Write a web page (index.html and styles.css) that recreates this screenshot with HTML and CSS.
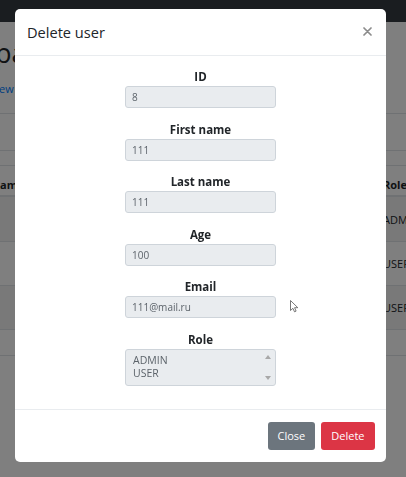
FILE: index.html
```html
<!DOCTYPE html>
<html lang="en">
<head>
<meta charset="utf-8">
<title>Delete user</title>
<link rel="stylesheet" href="styles.css">
</head>
<body>
<div class="page">
  <div class="navbar"></div>
  <div class="head"><h1 class="page-title">pa</h1></div>
  <div class="tabs"><span class="tab-link">ew</span></div>
  <div class="card-head"></div>
  <div class="table">
    <div class="trow thead"><span class="cell">am</span><span class="cell">Role</span></div>
    <div class="trow striped"><span class="cell"></span><span class="cell">ADMIN</span></div>
    <div class="trow"><span class="cell"></span><span class="cell">USER</span></div>
    <div class="trow striped"><span class="cell"></span><span class="cell">USER</span></div>
    <div class="trow last"></div>
  </div>
</div>
<div class="backdrop"></div>
<div class="modal">
  <div class="modal-header">
    <h5 class="modal-title">Delete user</h5>
    <span class="close" aria-label="Close">
      <svg width="9" height="9" viewBox="0 0 9 9"><path d="M1 1 L8 8 M8 1 L1 8" stroke="#8c8c8c" stroke-width="1.7" stroke-linecap="round"/></svg>
    </span>
  </div>
  <div class="modal-body">
    <div class="group"><label class="label">ID</label><div class="input">8</div></div>
    <div class="group"><label class="label">First name</label><div class="input">111</div></div>
    <div class="group"><label class="label">Last name</label><div class="input">111</div></div>
    <div class="group"><label class="label">Age</label><div class="input">100</div></div>
    <div class="group"><label class="label">Email</label><div class="input">111@mail.ru</div></div>
    <div class="group"><label class="label">Role</label>
      <div class="listbox">
        <div class="options"><div class="opt">ADMIN</div><div class="opt">USER</div></div>
        <div class="scrollbar">
          <svg width="6" height="4" viewBox="0 0 6 4"><path d="M0 4 L3 0 L6 4 Z" fill="#a8a8a8"/></svg>
          <svg width="6" height="4" viewBox="0 0 6 4"><path d="M0 0 L3 4 L6 0 Z" fill="#a8a8a8"/></svg>
        </div>
      </div>
    </div>
  </div>
  <div class="modal-footer">
    <button class="btn btn-secondary">Close</button>
    <button class="btn btn-danger">Delete</button>
  </div>
</div>
<svg class="cursor" width="10" height="13" viewBox="0 0 10 13"><path d="M0.5 0.5 L0.5 10.5 L2.9 8.3 L4.5 11.8 L6.1 11.1 L4.6 7.7 L7.8 7.7 Z" fill="#ffffff" stroke="#555" stroke-width="0.8" stroke-linejoin="round"/></svg>
</body>
</html>
```

FILE: styles.css
```css
* { box-sizing: border-box; }
html, body { margin: 0; padding: 0; }
body {
  width: 406px;
  height: 477px;
  overflow: hidden;
  background: #ffffff;
  font-family: "Open Sans", "Noto Sans", sans-serif;
  color: #212529;
}
.page { width: 406px; }
.navbar { height: 22px; background: #343a40; }
.head { height: 60px; padding-top: 14px; }
.page-title {
  margin: 0 0 0 -5px;
  font-size: 27px;
  font-weight: 400;
  line-height: 34px;
}
.tabs {
  height: 32px;
  border-bottom: 1px solid #dee2e6;
  font-size: 11px;
  line-height: 14px;
}
.tab-link { color: #007bff; margin-left: -1px; }
.card-head { height: 37px; border-bottom: 1px solid #dee2e6; }
.table { margin-top: 14px; border-top: 1px solid #dee2e6; }
.trow {
  display: grid;
  grid-template-columns: 383px 1fr;
  height: 44px;
  align-items: center;
  font-size: 11px;
  border-top: 1px solid #dee2e6;
}
.trow:first-child { border-top: 0; }
.thead {
  height: 31px;
  align-items: end;
  padding-bottom: 3px;
  font-weight: 700;
  border-bottom: 2px solid #dee2e6;
}
.thead + .trow { border-top: 0; }
.striped { background: rgba(0, 0, 0, 0.05); }
.cell { white-space: nowrap; overflow: hidden; }
.trow.last { height: 27px; border-bottom: 1px solid #dee2e6; }

.backdrop {
  position: fixed;
  inset: 0;
  background: rgba(0, 0, 0, 0.5);
}
.modal {
  position: fixed;
  left: 15px;
  top: 9px;
  width: 371px;
  background: #ffffff;
  border-radius: 5px;
  display: flex;
  flex-direction: column;
}
.modal-header {
  height: 47px;
  border-bottom: 1px solid #e9ecef;
  display: flex;
  align-items: center;
  justify-content: space-between;
  padding: 0 14px 1px 12px;
}
.modal-title {
  margin: 0;
  font-size: 14.6px;
  font-weight: 400;
  color: #212529;
  line-height: 20px;
}
.close { display: flex; margin-top: -1px; }
.modal-body {
  padding: 13px 0 23px;
  display: flex;
  flex-direction: column;
  align-items: center;
  gap: 13.6px;
}
.group {
  display: flex;
  flex-direction: column;
  align-items: center;
  gap: 1px;
}
.label {
  font-size: 11.5px;
  font-weight: 700;
  line-height: 16px;
  color: #212529;
}
.input {
  width: 151px;
  height: 22px;
  background: #e9ecef;
  border: 1px solid #ced4da;
  border-radius: 3px;
  padding: 0 6px;
  font-size: 10px;
  line-height: 20px;
  color: #5c636a;
}
.listbox {
  width: 151px;
  height: 37px;
  background: #e9ecef;
  border: 1px solid #ced4da;
  border-radius: 3px;
  display: flex;
  justify-content: space-between;
}
.options {
  padding: 4px 0 0 7px;
  font-size: 10.5px;
  line-height: 13.5px;
  color: #5c636a;
}
.scrollbar {
  width: 13px;
  display: flex;
  flex-direction: column;
  justify-content: space-between;
  align-items: center;
  padding: 5px 1px 5px 0;
}
.scrollbar svg { display: block; }
.modal-footer {
  border-top: 1px solid #e9ecef;
  padding: 12px 11px 12px;
  display: flex;
  justify-content: flex-end;
  gap: 6px;
}
.btn {
  height: 28px;
  border: 0;
  border-radius: 3px;
  padding: 0 9.5px;
  font-family: "Open Sans", "Noto Sans", sans-serif;
  font-size: 11px;
  color: #ffffff;
  line-height: 28px;
}
.btn-secondary { background: #6c757d; }
.btn-danger { background: #dc3545; padding: 0 10.5px; }
.cursor {
  position: fixed;
  left: 290px;
  top: 300px;
}
```
